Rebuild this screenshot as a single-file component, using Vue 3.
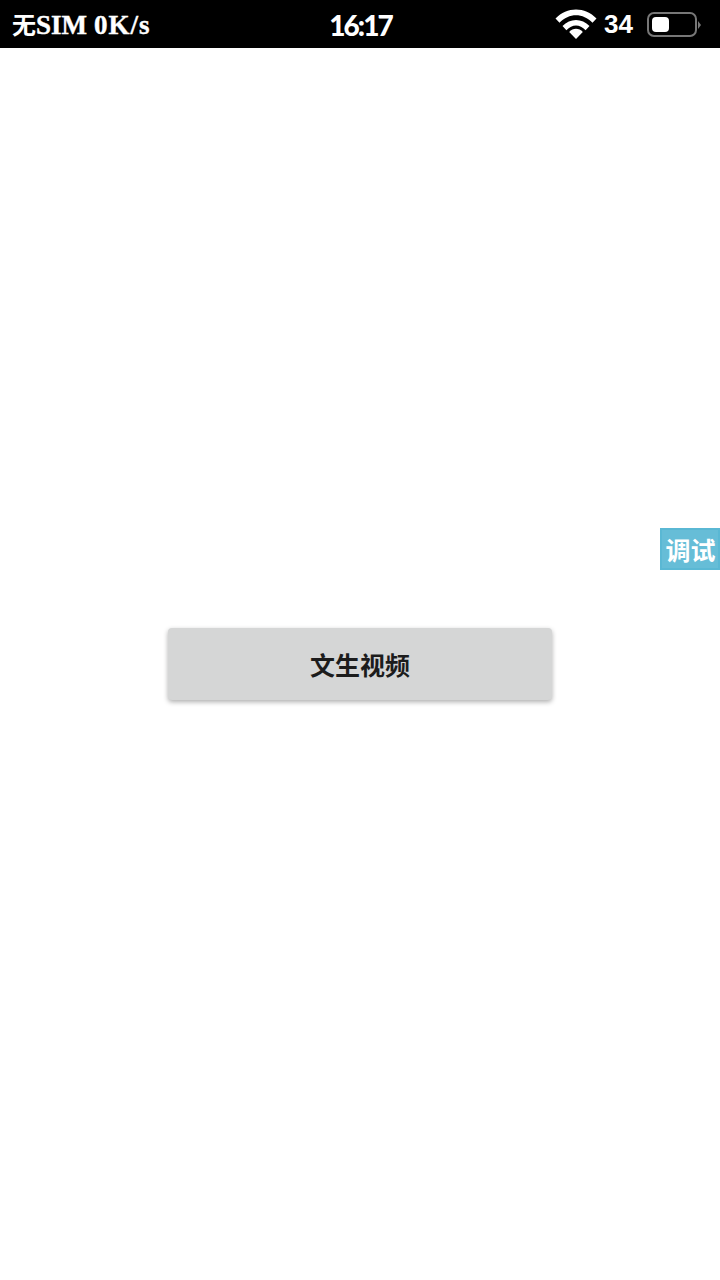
<script setup>
const title = '文生视频'
</script>

<template>
  <div class="page">
    <header class="status">
      <div class="left"><span class="cjk">无</span><span>SIM</span><span class="speed">0K/s</span></div>
      <div class="time">16:17</div>
      <div class="right">
        <svg class="wifi" width="42" height="32" viewBox="0 0 42 32">
          <path d="M0.5 10.5C12 -1.5 30 -1.5 41.5 10.5L37.5 14.8C28 4.8 14 4.8 4.5 14.8Z" fill="#fff"/>
          <path d="M7.5 18C15 10 27 10 34.5 18L30.6 22.2C24.8 15.8 17.2 15.8 11.4 22.2Z" fill="#fff"/>
          <path d="M14.2 25C18 20.6 24 20.6 27.8 25L21 32Z" transform="translate(0 -1)" fill="#fff"/>
        </svg>
        <span class="level">34</span>
        <div class="battery">
          <div class="shell"><div class="fill"></div></div>
          <div class="nub"></div>
        </div>
      </div>
    </header>
    <main class="content">
      <button class="action">{{ title }}</button>
    </main>
    <div class="debug">调试</div>
  </div>
</template>

<style>
html, body { margin: 0; background: #fff; }
</style>

<style scoped>
.page {
  position: relative;
  width: 720px;
  height: 1280px;
  display: flex;
  flex-direction: column;
  background: #fff;
  font-family: "Noto Sans CJK SC", sans-serif;
}
.status {
  height: 48px;
  flex: none;
  background: #000;
  color: #fff;
  display: grid;
  grid-template-columns: 1fr auto 1fr;
  align-items: center;
  padding: 0 12px;
  box-sizing: border-box;
}
.left {
  font-family: "Liberation Serif", "Noto Sans CJK SC", serif;
  font-weight: 700;
  font-size: 27px;
  white-space: nowrap;
  -webkit-text-stroke: 0.4px #fff;
  line-height: 48px;
}
.speed {
  margin-left: 7px;
  letter-spacing: 1px;
}
.cjk {
  font-family: "Noto Sans CJK SC", sans-serif;
  font-size: 24px;
  -webkit-text-stroke: 0;
}
.time {
  font-family: "Lato", sans-serif;
  font-weight: 900;
  font-size: 28px;
  letter-spacing: -2px;
  padding-left: 1px;
}
.right {
  display: flex;
  align-items: center;
  justify-content: flex-end;
  gap: 7px;
  margin-right: 7px;
}
.wifi { flex: none; margin-top: -2px; }
.level {
  font-family: "Liberation Sans", sans-serif;
  font-weight: 700;
  font-size: 26px;
  margin-right: 7px;
}
.battery {
  display: flex;
  align-items: center;
  gap: 1px;
}
.shell {
  width: 50px;
  height: 25px;
  box-sizing: border-box;
  border: 2px solid #777;
  border-radius: 7px;
  padding: 3px;
}
.fill {
  width: 17px;
  height: 100%;
  background: #fff;
  border-radius: 4px;
}
.nub {
  width: 0;
  height: 0;
  border-left: 3px solid #777;
  border-top: 4px solid transparent;
  border-bottom: 4px solid transparent;
}
.content {
  flex: 1;
  display: flex;
  align-items: center;
  justify-content: center;
}
.action {
  width: 384px;
  height: 72px;
  border: none;
  border-radius: 4px;
  background: #d5d6d6;
  color: #1c1c1c;
  font-family: "Noto Sans CJK SC", sans-serif;
  font-weight: 700;
  font-size: 25px;
  box-shadow: 0 2px 5px rgba(0, 0, 0, 0.32);
  padding: 0;
}
.debug {
  position: absolute;
  right: 0;
  top: 528px;
  width: 60px;
  height: 42px;
  box-sizing: border-box;
  border: 2px solid #5ab8d4;
  background: #66bdd7;
  color: #fff;
  font-weight: 700;
  font-size: 25px;
  line-height: 38px;
  padding-left: 1px;
  text-align: center;
  white-space: nowrap;
}
</style>
